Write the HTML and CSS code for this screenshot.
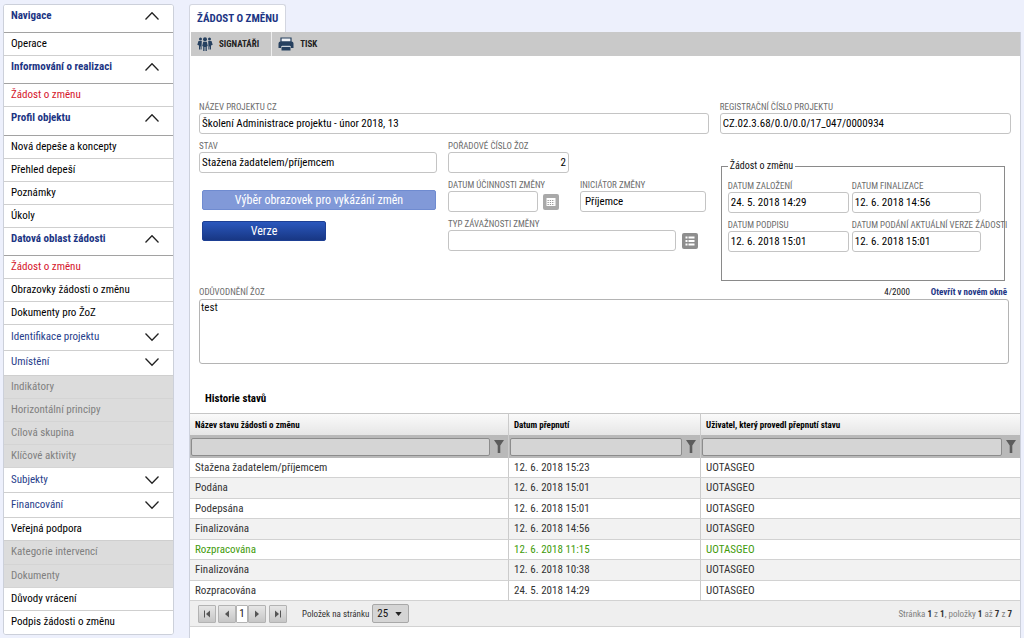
FILE: index.html
```html
<!DOCTYPE html>
<html lang="cs">
<head>
<meta charset="utf-8">
<title>Žádost o změnu</title>
<link rel="stylesheet" href="styles.css">
</head>
<body>
<svg class="sprite" aria-hidden="true">
  <symbol id="up" viewBox="0 0 16 10"><path d="M1.500 8.500 8 1.800l6.500 6.700" fill="none" stroke="#222" stroke-width="1.300"/></symbol>
  <symbol id="down" viewBox="0 0 16 10"><path d="M1.500 1.500 8 8.200l6.500-6.700" fill="none" stroke="#222" stroke-width="1.300"/></symbol>
  <symbol id="funnel" viewBox="0 0 10 13"><path d="M0 0h10L6.300 5.500V13H3.700V5.500z" fill="#5c5c5c"/></symbol>
</svg>
<div class="page">
  <nav class="sidebar">
    <button class="group">Navigace<svg class="chev"><use href="#up"/></svg></button>
    <a class="item" href="#">Operace</a>
    <button class="group">Informování o realizaci<svg class="chev"><use href="#up"/></svg></button>
    <a class="item active" href="#">Žádost o změnu</a>
    <button class="group">Profil objektu<svg class="chev"><use href="#up"/></svg></button>
    <a class="item" href="#">Nová depeše a koncepty</a>
    <a class="item" href="#">Přehled depeší</a>
    <a class="item" href="#">Poznámky</a>
    <a class="item" href="#">Úkoly</a>
    <button class="group">Datová oblast žádosti<svg class="chev"><use href="#up"/></svg></button>
    <a class="item active" href="#">Žádost o změnu</a>
    <a class="item" href="#">Obrazovky žádosti o změnu</a>
    <a class="item" href="#">Dokumenty pro ŽoZ</a>
    <button class="group closed">Identifikace projektu<svg class="chev"><use href="#down"/></svg></button>
    <button class="group closed">Umístění<svg class="chev"><use href="#down"/></svg></button>
    <span class="item disabled">Indikátory</span>
    <span class="item disabled">Horizontální principy</span>
    <span class="item disabled">Cílová skupina</span>
    <span class="item disabled">Klíčové aktivity</span>
    <button class="group closed">Subjekty<svg class="chev"><use href="#down"/></svg></button>
    <button class="group closed">Financování<svg class="chev"><use href="#down"/></svg></button>
    <a class="item" href="#">Veřejná podpora</a>
    <span class="item disabled">Kategorie intervencí</span>
    <span class="item disabled">Dokumenty</span>
    <a class="item" href="#">Důvody vrácení</a>
    <a class="item" href="#">Podpis žádosti o změnu</a>
  </nav>

  <main class="main">
    <h1 class="tab">ŽÁDOST O ZMĚNU</h1>
    <div class="panel">
      <div class="toolbar">
        <button class="tool">
          <svg class="tool-icon" viewBox="0 0 16 16" fill="#26405f"><circle cx="8" cy="3.200" r="2"/><circle cx="3.500" cy="3" r="1.500"/><circle cx="12.500" cy="3" r="1.500"/><path d="M6.200 5.800h3.600l1 4.200-1 .5V15H8.500v-4h-1v4H6.200v-4.500l-1-.5zM1.500 5h3.300L4.600 10v3.500H3.500V10.500H3v3H2V9.500L.3 8.700zM14.500 5h-3.300l.2 5v3.500h1.100v-3h.5v3h1V9.500l1.700-.8z"/></svg>SIGNATÁŘI</button>
        <button class="tool">
          <svg class="tool-icon" viewBox="0 0 16 16"><path d="M3 2h10v4H3z" fill="#eef1f5" stroke="#26405f" stroke-width="1.200"/><path d="M2.500 5.500h11A2 2 0 0 1 15.500 7.500V12H13v-2H3v2H.5V7.500a2 2 0 0 1 2-2z" fill="#26405f"/><path d="M3.500 10.500h9v4h-9z" fill="#26405f"/><path d="M4 10.300h8" stroke="#dde3ea" stroke-width="1"/></svg>TISK</button>
      </div>

      <form class="form">
        <div class="columns">
          <div class="field"><label for="nazev">NÁZEV PROJEKTU CZ</label><input id="nazev" value="Školení Administrace projektu - únor 2018, 13"></div>
          <div class="field"><label for="reg">REGISTRAČNÍ ČÍSLO PROJEKTU</label><input id="reg" value="CZ.02.3.68/0.0/0.0/17_047/0000934"></div>
          <div class="state">
            <div class="stack">
              <div class="field"><label for="stav">STAV</label><input id="stav" value="Stažena žadatelem/příjemcem"></div>
              <div class="actions">
                <button type="button" class="btn wide" disabled>Výběr obrazovek pro vykázání změn</button>
                <button type="button" class="btn">Verze</button>
              </div>
            </div>
            <div class="stack">
              <div class="field short"><label for="poradi">POŘADOVÉ ČÍSLO ŽOZ</label><input id="poradi" class="num" value="2"></div>
              <div class="pair">
                <div class="field"><label for="ucinnost">DATUM ÚČINNOSTI ZMĚNY</label>
                  <div class="with-icon"><input id="ucinnost"><button type="button" class="pick" aria-label="Kalendář"><svg viewBox="0 0 16 16"><path d="M3.500 4h9v8h-9z" fill="#fff"/><path d="M4.500 6.500h7m-7 2h7m-7 2h7" stroke="#999" stroke-dasharray="1.300 1"/></svg></button></div></div>
                <div class="field"><label for="iniciator">INICIÁTOR ZMĚNY</label><input id="iniciator" class="roomy" value="Příjemce"></div>
              </div>
              <div class="field"><label for="typ">TYP ZÁVAŽNOSTI ZMĚNY</label>
                <div class="with-icon type"><input id="typ"><button type="button" class="pick dark" aria-label="Seznam"><svg viewBox="0 0 16 16"><path d="M3.500 4.500h2m1 0h6m-9 3.500h2m1 0h6m-9 3.500h2m1 0h6" stroke="#fff" stroke-width="2"/></svg></button></div></div>
            </div>
          </div>
          <fieldset class="dates">
            <legend>Žádost o změnu</legend>
            <div class="field"><label for="d1">DATUM ZALOŽENÍ</label><input id="d1" value="24. 5. 2018 14:29"></div>
            <div class="field"><label for="d2">DATUM FINALIZACE</label><input id="d2" value="12. 6. 2018 14:56"></div>
            <div class="field"><label for="d3">DATUM PODPISU</label><input id="d3" value="12. 6. 2018 15:01"></div>
            <div class="field"><label for="d4">DATUM PODÁNÍ AKTUÁLNÍ VERZE ŽÁDOSTI</label><input id="d4" value="12. 6. 2018 15:01"></div>
          </fieldset>
        </div>
        <div class="reason">
          <div class="reason-head"><label for="oduv">ODŮVODNĚNÍ ŽOZ</label><span class="count">4/2000</span><a href="#">Otevřít v novém okně</a></div>
          <textarea id="oduv">test</textarea>
        </div>
      </form>

      <h2 class="heading">Historie stavů</h2>
      <table class="grid">
        <colgroup><col class="c1"><col class="c2"><col class="c3"></colgroup>
        <thead>
          <tr><th>Název stavu žádosti o změnu</th><th>Datum přepnutí</th><th>Uživatel, který provedl přepnutí stavu</th></tr>
          <tr class="filters">
            <td><div class="filter"><input aria-label="Filtr názvu stavu"><button aria-label="Filtrovat"><svg><use href="#funnel"/></svg></button></div></td>
            <td><div class="filter"><input aria-label="Filtr data"><button aria-label="Filtrovat"><svg><use href="#funnel"/></svg></button></div></td>
            <td><div class="filter"><input aria-label="Filtr uživatele"><button aria-label="Filtrovat"><svg><use href="#funnel"/></svg></button></div></td>
          </tr>
        </thead>
        <tbody>
          <tr><td>Stažena žadatelem/příjemcem</td><td>12. 6. 2018 15:23</td><td>UOTASGEO</td></tr>
          <tr><td>Podána</td><td>12. 6. 2018 15:01</td><td>UOTASGEO</td></tr>
          <tr><td>Podepsána</td><td>12. 6. 2018 15:01</td><td>UOTASGEO</td></tr>
          <tr><td>Finalizována</td><td>12. 6. 2018 14:56</td><td>UOTASGEO</td></tr>
          <tr class="current"><td>Rozpracována</td><td>12. 6. 2018 11:15</td><td>UOTASGEO</td></tr>
          <tr><td>Finalizována</td><td>12. 6. 2018 10:38</td><td>UOTASGEO</td></tr>
          <tr><td>Rozpracována</td><td>24. 5. 2018 14:29</td><td>UOTASGEO</td></tr>
        </tbody>
      </table>
      <div class="pager">
        <button class="pg" aria-label="První"><svg viewBox="0 0 10 10"><path d="M2.500 1.500v7" stroke="#555"/><path d="M8 1.500v7L4 5z" fill="#555"/></svg></button>
        <button class="pg prev" aria-label="Předchozí"><svg viewBox="0 0 10 10"><path d="M7 1.500v7L3 5z" fill="#555"/></svg></button>
        <button class="pg page-no">1</button>
        <button class="pg" aria-label="Další"><svg viewBox="0 0 10 10"><path d="M3 1.500v7L7 5z" fill="#555"/></svg></button>
        <button class="pg last" aria-label="Poslední"><svg viewBox="0 0 10 10"><path d="M7.500 1.500v7" stroke="#555"/><path d="M2 1.500v7L6 5z" fill="#555"/></svg></button>
        <label for="size">Položek na stránku</label>
        <span class="select"><select id="size"><option>25</option></select><svg viewBox="0 0 8 5"><path d="M0 0h8L4 5z" fill="#222"/></svg></span>
        <span class="summary">Stránka <b>1</b> z <b>1</b>, položky <b>1</b> až <b>7</b> z <b>7</b></span>
      </div>
    </div>
  </main>
</div>
</body>
</html>
```
FILE: styles.css
```css
* { box-sizing: border-box; }
body { margin: 0; background: #edf0fc; color: #111; font: 11px/16px "Roboto Condensed", Roboto, sans-serif; }
button, input, select, textarea { font: inherit; color: inherit; margin: 0; }
button { cursor: pointer; }
a { text-decoration: none; }
.sprite { position: absolute; width: 0; height: 0; }

.page { display: grid; grid-template-columns: 171px minmax(0, 1fr); gap: 15px; min-height: 100vh; padding: 4px 3px 0; }

/* Sidebar */
.sidebar { display: flex; flex-direction: column; margin-bottom: 3px; background: #fff; border: 1px solid #ccd0da; border-radius: 3px; overflow: hidden; }
.item, .group { flex: 1 0 23px; display: flex; align-items: center; justify-content: space-between; padding: 0 13px 0 7px; border: 0; border-bottom: 1px solid #cfcfcf; background: #fff; color: #000; text-align: left; }
.item:last-child { border-bottom: 0; }
.item.active { color: #d5152b; }
.item.disabled { background: #dcdcdc; border-color: #d4d4d4; color: #808080; }
.group { flex-basis: 28px; padding-bottom: 5px; border-bottom-color: #a2a2a2; color: #1c3584; font-weight: 700; }
.group.closed { flex-basis: 25px; padding-bottom: 1px; border-bottom-color: #cfcfcf; font-weight: 400; color: #27408b; }
.chev { width: 16px; height: 10px; }

/* Main panel */
.main { display: flex; flex-direction: column; align-items: stretch; }
.tab { align-self: flex-start; margin: 0; padding: 0 7px; background: #fff; border: 1px solid #d3d6e0; border-bottom: 0; border-radius: 3px 3px 0 0; color: #1c3584; font-size: 11px; line-height: 27px; }
.panel { flex: 1; background: #fff; border: 1px solid #cdd1dc; border-width: 0 1px; }
.toolbar { display: flex; height: 24px; margin-left: 1px; background: #c9c9c9; }
.tool { display: flex; align-items: center; gap: 6px; padding: 0 12px 0 6px; border: 0; border-right: 1px solid #eee; background: none; color: #222; font-size: 9px; font-weight: 700; }
.tool:last-child { border-right: 0; }
.tool-icon { width: 16px; height: 16px; }

/* Form */
.form { padding: 45px 9px 0; }
.columns { display: grid; grid-template-columns: minmax(0, 7fr) minmax(0, 4fr); gap: 6px 11px; }
.field { display: flex; flex-direction: column; min-width: 0; }
label { color: #6c6c6c; font-size: 9px; line-height: 12px; white-space: nowrap; }
.field input { width: 100%; height: 21px; padding: 0 2px; border: 1px solid #c4c4c4; border-radius: 3px; background: #fff; color: #000; }
.field .num { text-align: right; }
.field .roomy { padding-left: 4px; }
.state { display: grid; grid-template-columns: 238px minmax(0, 1fr); gap: 11px; }
.stack { display: flex; flex-direction: column; gap: 6px; }
.actions { display: flex; flex-direction: column; align-items: flex-start; gap: 11px; padding: 11px 1px 0 3px; }
.btn { width: 124px; height: 20px; padding: 0; border: 1px solid #1d3f94; border-radius: 2px; background: linear-gradient(#2a57bd, #183784); color: #fff; font-size: 12px; line-height: 18px; }
.btn.wide { width: 100%; border-color: #6f8bd0; background: #8199d8; }
.short { width: 121px; }
.pair { display: grid; grid-template-columns: 120px 126px; gap: 12px; }
.with-icon { display: grid; grid-template-columns: minmax(0, 1fr) 16px; gap: 5px; align-items: center; padding-right: 9px; }
.with-icon.type { gap: 6px; padding-right: 11px; }
.pick { width: 16px; height: 16px; padding: 0; border: 0; border-radius: 2px; background: #a9a9a9; }
.pick.dark { background: #8e8e8e; }
.pick svg { display: block; width: 16px; height: 16px; }

.dates { display: grid; grid-template-columns: 121px 129px; align-content: start; gap: 6px 3px; height: 121px; min-width: 0; margin: 20px 6px 0 1px; padding: 8px 7px 0 6px; border: 1px solid #8a8a8a; }
.dates legend { padding: 0 2px; font-size: 10px; line-height: 12px; }

.reason { margin: 4px 2px 0 0; }
.reason-head { display: flex; align-items: center; padding-right: 2px; }
.reason-head label { flex: 1; }
.reason-head .count { margin-right: 21px; font-size: 9px; line-height: 14px; }
.reason-head a { color: #1c3584; font-size: 9px; font-weight: 700; line-height: 14px; }
textarea { display: block; width: 100%; height: 65px; padding: 0 1px; border: 1px solid #b4b4b4; border-radius: 3px; resize: none; }

/* Table */
.heading { margin: 27px 15px 6px; font-size: 11px; line-height: 16px; color: #000; }
.grid { width: 100%; border-collapse: separate; border-spacing: 0; table-layout: fixed; color: #333; }
.c1 { width: 318px; }
.c2 { width: 192px; }
.grid th { height: 22px; padding: 0 5px; border-top: 1px solid #c6c6c6; background: linear-gradient(#fafafa, #e6e6e6); color: #000; font-size: 9px; text-align: left; }
.grid th + th, .grid td + td { border-left: 1px solid #cbcbcb; }
.grid tbody td { height: 20px; padding: 0 5px; border-bottom: 1px solid #d2d2d2; line-height: 16px; }
.grid tbody tr:nth-child(even) td { height: 21px; background: #f2f2f2; }
.grid tbody .current { color: #3f9b0b; }
.filters td { height: 23px; padding: 0 1px; background: #b9b9b9; }
.filter { display: flex; align-items: center; }
.filter input { flex: 1; min-width: 0; height: 18px; border: 1px solid #8c8c8c; border-radius: 2px; background: #d5d5d5; }
.filter button { display: flex; justify-content: center; width: 17px; padding: 0; border: 0; background: none; }
.filter svg { width: 10px; height: 13px; }

.pager { display: flex; align-items: center; height: 26px; padding: 0 8px; border-bottom: 1px solid #d2d2d2; background: #efefef; }
.pg { display: flex; align-items: center; justify-content: center; width: 18px; height: 18px; padding: 0; border: 1px solid #b3b3b3; border-radius: 1px; background: linear-gradient(#e6e6e6, #c6c6c6); }
.pg svg { width: 10px; height: 10px; }
.pg.prev { margin-left: 2px; }
.pg.page-no { width: 12px; background: #fff; }
.pg.last { margin-left: 3px; }
.pager label { margin: 0 3px 0 15px; color: #333; }
.select { display: grid; align-items: center; width: 37px; height: 19px; }
.select select, .select svg { grid-area: 1 / 1; }
.select select { appearance: none; width: 100%; height: 100%; padding: 0 4px; border: 1px solid #a8a8a8; border-radius: 2px; background: #d5d5d5; }
.select svg { justify-self: end; width: 7px; height: 4px; margin-right: 7px; pointer-events: none; }
.summary { margin-left: auto; color: #808080; font-size: 9px; }
.summary b { color: #333; }
```
